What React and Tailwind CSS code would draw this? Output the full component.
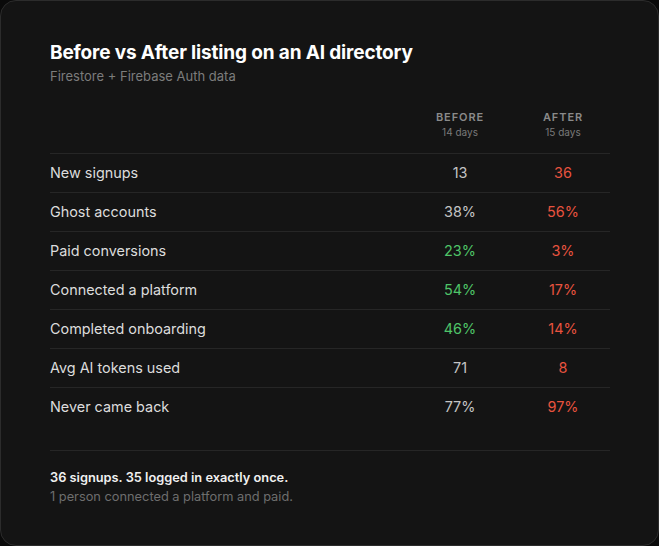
import React from "react";

const rows = [
  { label: "New signups", before: "13", after: "36", bc: "text-[#c4c4c4]", ac: "text-[#e8533f]" },
  { label: "Ghost accounts", before: "38%", after: "56%", bc: "text-[#c4c4c4]", ac: "text-[#e8533f]" },
  { label: "Paid conversions", before: "23%", after: "3%", bc: "text-[#4fc468]", ac: "text-[#e8533f]" },
  { label: "Connected a platform", before: "54%", after: "17%", bc: "text-[#4fc468]", ac: "text-[#e8533f]" },
  { label: "Completed onboarding", before: "46%", after: "14%", bc: "text-[#4fc468]", ac: "text-[#e8533f]" },
  { label: "Avg AI tokens used", before: "71", after: "8", bc: "text-[#c4c4c4]", ac: "text-[#e8533f]" },
  { label: "Never came back", before: "77%", after: "97%", bc: "text-[#c4c4c4]", ac: "text-[#e8533f]" },
];

export default function App() {
  return (
    <div className="w-[659px] h-[546px] bg-[#0a0a0a]" style={{ fontFamily: "Inter, 'Noto Sans', sans-serif" }}>
      <div className="w-full h-full rounded-[16px] border border-[#2c2c2c] bg-[#141414] pl-[49px] pr-[48px] pt-[39px]">
        <h1 className="text-[19px] leading-[26px] font-bold text-white tracking-[-0.15px]">
          Before vs After listing on an AI directory
        </h1>
        <p className="text-[13px] leading-[20px] text-[#7c7c7c]">Firestore + Firebase Auth data</p>

        <div className="mt-[24px]">
          <div className="grid grid-cols-[1fr_94px_94px] gap-x-[9px] pb-[14px]">
            <div />
            <div className="text-center">
              <div className="text-[11px] leading-[14px] font-semibold tracking-[0.9px] text-[#8a8a8a]">BEFORE</div>
              <div className="text-[10px] leading-[14px] text-[#7a7a7a] mt-[1px]">14 days</div>
            </div>
            <div className="text-center">
              <div className="text-[11px] leading-[14px] font-semibold tracking-[0.9px] text-[#8a8a8a]">AFTER</div>
              <div className="text-[10px] leading-[14px] text-[#7a7a7a] mt-[1px]">15 days</div>
            </div>
          </div>
          {rows.map((r) => (
            <div
              key={r.label}
              className="grid grid-cols-[1fr_94px_94px] gap-x-[9px] items-center h-[39px] border-t border-[#262626] text-[14.4px]"
            >
              <div className="text-[#dcdcdc]">{r.label}</div>
              <div className={`text-center ${r.bc}`}>{r.before}</div>
              <div className={`text-center ${r.ac}`}>{r.after}</div>
            </div>
          ))}
          <div className="border-t border-[#262626] mt-[24px] pt-[18px]">
            <p className="text-[12.8px] leading-[18px] font-semibold text-[#f0f0f0]">36 signups. 35 logged in exactly once.</p>
            <p className="text-[12.8px] leading-[19px] text-[#6e6e6e]">1 person connected a platform and paid.</p>
          </div>
        </div>
      </div>
    </div>
  );
}
